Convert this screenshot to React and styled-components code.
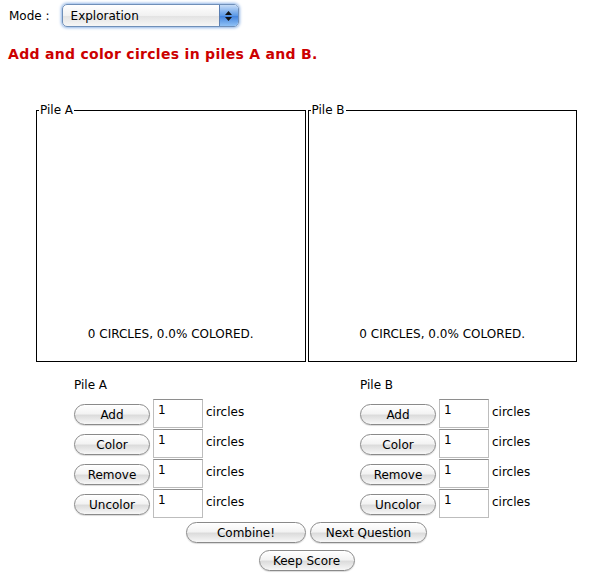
import styled, { createGlobalStyle } from "styled-components"

const Global = createGlobalStyle`
    body {
        margin: 0;
        background: #fff;
        font-family: "DejaVu Sans", Verdana, sans-serif;
        color: #000;
    }
`

const Page = styled.div`
    width: 591px;
    height: 577px;
    position: relative;
`

const ModeBar = styled.div`
    display: flex;
    align-items: center;
    gap: 12px;
    padding: 4px 0 0 9px;
    font-size: 12px;
`

const Select = styled.div`
    width: 177px;
    height: 23px;
    box-sizing: border-box;
    border: 1px solid #6f8fb8;
    border-radius: 5px;
    box-shadow: 0 0 3px 1px #8fb4e6;
    background: linear-gradient(#ffffff, #f1f1f1 50%, #e2e2e2 51%, #f6f6f6);
    display: flex;
    align-items: center;
    justify-content: space-between;
    padding-left: 8px;
    font-size: 12px;
    overflow: hidden;
`

const Arrows = styled.div`
    width: 18px;
    height: 100%;
    background: linear-gradient(#c6dcf7, #5d9ae6 50%, #3f80dc 51%, #8fc1f5);
    border-left: 1px solid #5a7fb3;
    display: flex;
    flex-direction: column;
    align-items: center;
    justify-content: center;
    gap: 2px;
`

const Heading = styled.h1`
    margin: 19px 0 0 8px;
    font-size: 14px;
    font-weight: bold;
    color: #cc0000;
    letter-spacing: 0.3px;
`

const Main = styled.div`
    width: 541px;
    margin: 41px 0 0 36px;
`

const Piles = styled.div`
    display: flex;
    gap: 2px;
`

const Pile = styled.fieldset`
    width: 270px;
    height: 259px;
    box-sizing: border-box;
    margin: 0;
    padding: 0;
    border: 1px solid #000;
    display: flex;
    flex-direction: column;
    justify-content: flex-end;
    align-items: center;
`

const Legend = styled.legend`
    font-size: 12px;
    padding: 0 1px;
    margin-left: 2px;
`

const Status = styled.div`
    font-size: 12px;
    margin-bottom: 20px;
`

const Controls = styled.div`
    display: flex;
    padding: 18px 0 0 38px;
    gap: 82px;
`

const Column = styled.div`
    display: flex;
    flex-direction: column;
    width: 204px;
`

const ColLabel = styled.div`
    font-size: 12px;
    margin-bottom: 8px;
    height: 11px;
    line-height: 11px;
`

const Row = styled.div`
    display: flex;
    align-items: flex-start;
    height: 30px;
`

const Button = styled.button`
    font-family: "DejaVu Sans", Verdana, sans-serif;
    font-size: 12px;
    color: #000;
    width: ${p => p.$w ?? 76}px;
    height: 21px;
    margin-top: ${p => p.$top ?? 5}px;
    padding: 0;
    border: 1px solid #8a8a8a;
    border-radius: 11px;
    background: linear-gradient(#ffffff, #f3f3f3 45%, #dcdcdc 55%, #f7f7f7);
    box-shadow: inset 0 1px 0 #fff, 0 1px 1px rgba(0,0,0,0.15);
`

const Input = styled.div`
    width: 50px;
    height: 29px;
    box-sizing: border-box;
    margin-left: 3px;
    border: 1px solid #bdbdbd;
    border-top-color: #8e8e8e;
    font-size: 12px;
    padding: 3px 0 0 4px;
`

const Unit = styled.span`
    font-size: 12px;
    margin: 6px 0 0 3px;
`

const Bottom = styled.div`
    display: flex;
    flex-direction: column;
    align-items: center;
    gap: 7px;
    margin-top: 3px;
`

const BottomRow = styled.div`
    display: flex;
    gap: 4px;
`

const actions = ["Add", "Color", "Remove", "Uncolor"]

function PileControls({ name }) {
    return (
        <Column>
            <ColLabel>{name}</ColLabel>
            {actions.map(a => (
                <Row key={a}>
                    <Button>{a}</Button>
                    <Input>1</Input>
                    <Unit>circles</Unit>
                </Row>
            ))}
        </Column>
    )
}

export default function App() {
    return (
        <Page>
            <Global />
            <ModeBar>
                <span>Mode :</span>
                <Select>
                    <span>Exploration</span>
                    <Arrows>
                        <svg width="7" height="4" viewBox="0 0 7 4"><path d="M0 4 L3.5 0 L7 4Z" fill="#111" /></svg>
                        <svg width="7" height="4" viewBox="0 0 7 4"><path d="M0 0 L3.5 4 L7 0Z" fill="#111" /></svg>
                    </Arrows>
                </Select>
            </ModeBar>
            <Heading>Add and color circles in piles A and B.</Heading>
            <Main>
                <Piles>
                    <Pile>
                        <Legend>Pile A</Legend>
                        <Status>0 CIRCLES, 0.0% COLORED.</Status>
                    </Pile>
                    <Pile>
                        <Legend>Pile B</Legend>
                        <Status>0 CIRCLES, 0.0% COLORED.</Status>
                    </Pile>
                </Piles>
                <Controls>
                    <PileControls name="Pile A" />
                    <PileControls name="Pile B" />
                </Controls>
                <Bottom>
                    <BottomRow>
                        <Button $w={120} $top={0}>Combine!</Button>
                        <Button $w={117} $top={0}>Next Question</Button>
                    </BottomRow>
                    <Button $w={96} $top={0}>Keep Score</Button>
                </Bottom>
            </Main>
        </Page>
    )
}
